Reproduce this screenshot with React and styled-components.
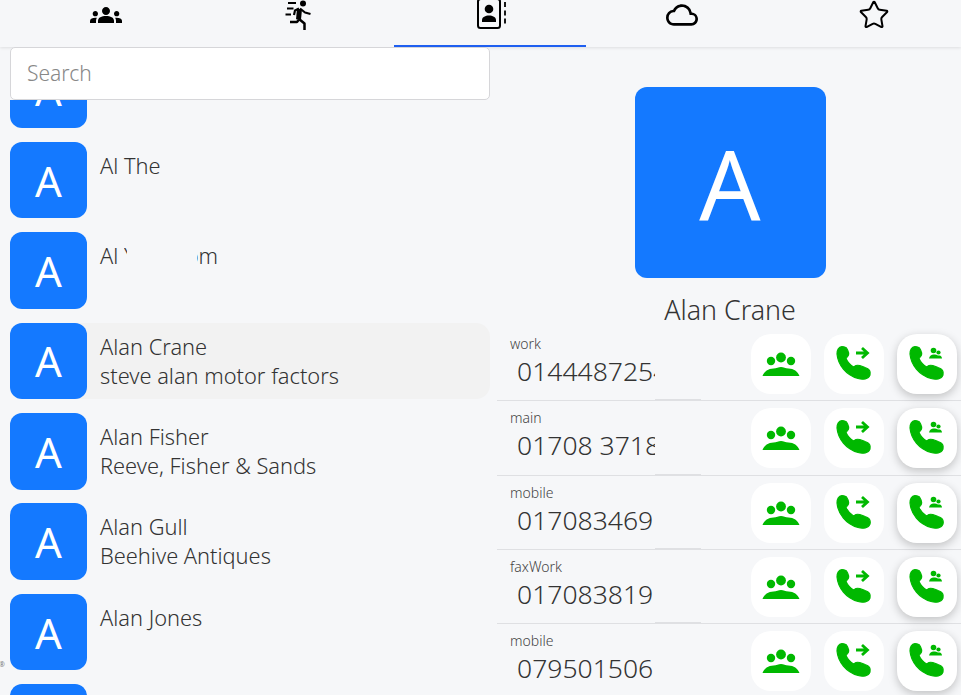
import React from "react";
import styled, { createGlobalStyle } from "styled-components";
import { MdGroups, MdOutlineCloud } from "react-icons/md";
import { Star } from "lucide-react";

const GREEN = "#00b800";

const contacts = [
  { id: 1, name: "Alan A" },
  { id: 2, name: "Al The" },
  { id: 3, redacted: true },
  { id: 4, name: "Alan Crane", company: "steve alan motor factors", selected: true },
  { id: 5, name: "Alan Fisher", company: "Reeve, Fisher & Sands" },
  { id: 6, name: "Alan Gull", company: "Beehive Antiques" },
  { id: 7, name: "Alan Jones" },
  { id: 8, name: "Alan Kay" },
];

const phones = [
  { label: "work", number: "01444872544" },
  { label: "main", number: "01708 371888" },
  { label: "mobile", number: "017083469" },
  { label: "faxWork", number: "017083819" },
  { label: "mobile", number: "079501506" },
];

const SprintIcon = () => (
  <svg width="40" height="32" viewBox="0 0 40 32" fill="none" stroke="#000" strokeLinecap="butt">
    <circle cx="25" cy="4.600" r="3" fill="#000" stroke="none" />
    <path d="M10 4h8M9 9.500h6.500M7.500 15.500h5.500" strokeWidth="2" />
    <path d="M21.500 10l-1 10.500" strokeWidth="5" />
    <path d="M22 9.500l5 4 5.500 1.500M21 9.500l-4 2-1 4.500" strokeWidth="2.200" strokeLinejoin="round" />
    <path d="M21 20.500l-2 2.500h-7M21 20l5.500 4.500V31" strokeWidth="2.500" strokeLinejoin="round" />
  </svg>
);

const ContactBookIcon = () => (
  <svg width="40" height="32" viewBox="0 0 40 32" fill="none" stroke="#000">
    <rect x="8" y="0" width="22" height="29" rx="2.500" strokeWidth="2" />
    <circle cx="19" cy="10" r="4.300" fill="#000" stroke="none" />
    <path d="M12 23v-2c0-3 3.500-4.500 7-4.500s7 1.500 7 4.500v2z" fill="#000" stroke="none" />
    <path d="M35 3v5M35 11.500v5M35 19.500v5" strokeWidth="1.800" />
  </svg>
);

const GroupCallIcon = () => (
  <svg width="60" height="60" viewBox="0 0 60 60" fill={GREEN}>
    <circle cx="20" cy="27" r="4.200" />
    <circle cx="30" cy="23.500" r="4.900" />
    <circle cx="40" cy="27" r="4.200" />
    <path d="M11.500 42c1.500-4.500 6-7.500 11-7.500 3 0 5-1.500 7.500-1.500s4.500 1.500 7.500 1.500c5 0 9.500 3 11 7.500z" />
  </svg>
);

const Handset = () => (
  <path
    d="M18 12.500C14.500 13 13 16 13 20 14 31 22 41 34 44.500 39 46 44.500 45 46 41 47 37 44.500 34.500 41 33.500 37 32 35 30.500 32 31.500L29.500 33C26.500 31 23.500 28 22 24.500L24 22C25.500 19.500 23.500 15.500 22.500 14 21.500 13 20 12.500 18 12.500Z"
    fill={GREEN}
    stroke={GREEN}
    strokeWidth="1.200"
    strokeLinejoin="round"
  />
);

const ForwardCallIcon = () => (
  <svg width="60" height="60" viewBox="0 0 60 60">
    <Handset />
    <path d="M32 19h11.500M38 14l5.500 5-5.500 5" fill="none" stroke={GREEN} strokeWidth="2.800" />
  </svg>
);

const ConferenceCallIcon = () => (
  <svg width="60" height="60" viewBox="0 0 60 60" fill={GREEN}>
    <Handset />
    <circle cx="36.500" cy="16.500" r="2.800" />
    <circle cx="41.500" cy="18.500" r="2.100" />
    <path d="M32 24.500c.5-2.500 2.500-4 4.500-4s4 .5 4.500 1h1.500c1.500 0 2.500 1.500 2.500 3z" />
  </svg>
);

const App = () => (
  <>
    <GlobalStyle />
    <Page>
      <TabBar>
        <Tab><MdGroups size={32} color="#000" /></Tab>
        <Tab><SprintIcon /></Tab>
        <Tab $active><ContactBookIcon /></Tab>
        <Tab><MdOutlineCloud size={32} color="#000" /></Tab>
        <Tab><Star size={32} strokeWidth={1.5} color="#000" /></Tab>
      </TabBar>
      <Body>
        <ListPane>
          <SearchBox placeholder="Search" />
          <ScrollArea>
            <ContactList>
              {contacts.map((c) => (
                <ContactRow key={c.id} $selected={c.selected}>
                  <Avatar>A</Avatar>
                  <ContactText>
                    {c.redacted ? (
                      <div>Al <ClippedY>Y</ClippedY><HiddenGap /><ClippedO>om</ClippedO></div>
                    ) : (
                      <div>{c.name}</div>
                    )}
                    {c.company && <div>{c.company}</div>}
                  </ContactText>
                </ContactRow>
              ))}
            </ContactList>
          </ScrollArea>
          <TinyMark>®</TinyMark>
        </ListPane>
        <DetailPane>
          <HeroAvatar>A</HeroAvatar>
          <HeroName>Alan Crane</HeroName>
          {phones.map((p, i) => (
            <PhoneRow key={i}>
              <PhoneInfo>
                <PhoneLabel>{p.label}</PhoneLabel>
                <PhoneNumber>{p.number}</PhoneNumber>
              </PhoneInfo>
              <CallButton><GroupCallIcon /></CallButton>
              <CallButton><ForwardCallIcon /></CallButton>
              <CallButton $raised><ConferenceCallIcon /></CallButton>
            </PhoneRow>
          ))}
        </DetailPane>
      </Body>
    </Page>
  </>
);

export default App;

const GlobalStyle = createGlobalStyle`
  html, body {
    margin: 0;
    padding: 0;
    background: #f6f7f9;
    font-family: "Noto Sans", "Open Sans", sans-serif;
    overflow: hidden;
  }
  * { box-sizing: border-box; }
`;

const Page = styled.div`
  width: 961px;
  height: 695px;
  overflow: hidden;
  display: flex;
  flex-direction: column;
  background: #f6f7f9;
`;

const TabBar = styled.div`
  flex: 0 0 47px;
  display: flex;
  padding-left: 10px;
  box-shadow: 0 1px 3px rgba(0, 0, 0, 0.1);
  position: relative;
  z-index: 0;
`;

const Tab = styled.div`
  flex: 0 0 192px;
  height: 47px;
  padding-bottom: 15px;
  display: flex;
  justify-content: center;
  align-items: center;
  border-bottom: 2px solid ${(p) => (p.$active ? "#1f5ff0" : "transparent")};
`;

const Body = styled.div`
  flex: 1;
  display: flex;
  min-height: 0;
  position: relative;
`;

const ListPane = styled.div`
  flex: 0 0 497px;
  padding: 0 7px 0 10px;
  display: flex;
  flex-direction: column;
  position: relative;
`;

const SearchBox = styled.input`
  flex: 0 0 52.500px;
  width: 480px;
  border: 1px solid #d6d6d9;
  border-radius: 5px;
  background: #fff;
  padding: 0 16px;
  font: 300 21px "Noto Sans", sans-serif;
  color: #444;
  outline: none;
  &::placeholder { color: #888; opacity: 1; }
`;

const ScrollArea = styled.div`
  flex: 1;
  overflow: hidden;
`;

const ContactList = styled.div`
  margin-top: -48.050px;
  display: flex;
  flex-direction: column;
  gap: 13.800px;
`;

const ContactRow = styled.div`
  flex: 0 0 76.600px;
  display: flex;
  border-radius: 14px;
  background: ${(p) => (p.$selected ? "#f2f2f2" : "transparent")};
`;

const Avatar = styled.div`
  flex: 0 0 77px;
  height: 76.600px;
  border-radius: 12px;
  background: #1479ff;
  color: #fff;
  font-size: 42px;
  font-weight: 400;
  display: flex;
  align-items: center;
  justify-content: center;
`;

const ContactText = styled.div`
  padding: 9px 0 0 13px;
  font-size: 21.800px;
  font-weight: 300;
  line-height: 29px;
  color: #333;
  white-space: nowrap;
`;

const ClippedY = styled.span`
  display: inline-block;
  width: 3px;
  overflow: hidden;
  vertical-align: bottom;
`;

const HiddenGap = styled.span`
  display: inline-block;
  width: 70px;
`;

const ClippedO = styled.span`
  display: inline-flex;
  justify-content: flex-end;
  width: 21px;
  overflow: hidden;
  vertical-align: bottom;
`;

const TinyMark = styled.span`
  position: absolute;
  left: -1px;
  top: 613px;
  font-size: 7px;
  line-height: 10px;
  color: #777;
`;

const DetailPane = styled.div`
  flex: 0 0 466px;
  display: flex;
  flex-direction: column;
  align-items: center;
  padding-top: 40px;
  overflow: hidden;
`;

const HeroAvatar = styled.div`
  flex: 0 0 191px;
  width: 191px;
  border-radius: 12px;
  background: #1479ff;
  color: #fff;
  font-size: 96px;
  font-weight: 400;
  display: flex;
  align-items: center;
  justify-content: center;
`;

const HeroName = styled.div`
  height: 49px;
  line-height: 64px;
  font-size: 26.800px;
  font-weight: 300;
  color: #333;
`;

const PhoneRow = styled.div`
  flex: 0 0 74.300px;
  width: 100%;
  display: flex;
  gap: 13px;
  padding: 7px 6px 0 0;
  border-bottom: 1px solid #dfe0e3;
  position: relative;
  &::after {
    content: "";
    position: absolute;
    left: 158px;
    bottom: 0;
    width: 46px;
    height: 1px;
    background: #dfe0e3;
  }
`;

const PhoneInfo = styled.div`
  flex: 1;
  min-width: 0;
  padding-left: 13px;
`;

const PhoneLabel = styled.div`
  font-size: 14px;
  line-height: 20px;
  font-weight: 300;
  color: #444;
`;

const PhoneNumber = styled.div`
  margin-left: 7px;
  width: 138px;
  overflow: hidden;
  white-space: nowrap;
  font-size: 26.500px;
  line-height: 35px;
  font-weight: 300;
  color: #333;
`;

const CallButton = styled.div`
  flex: 0 0 60px;
  height: 60px;
  border-radius: 20px;
  background: #fff;
  box-shadow: ${(p) => (p.$raised ? "0 3px 10px rgba(0, 0, 0, 0.22)" : "none")};
  svg { display: block; }
`;
